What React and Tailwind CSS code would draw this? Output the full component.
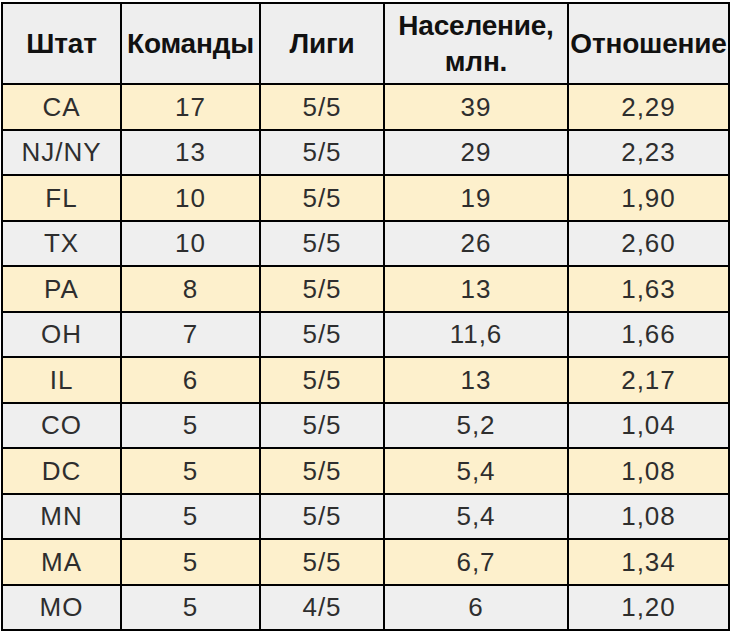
import React from "react";

const rows = [
  ["CA", "17", "5/5", "39", "2,29"],
  ["NJ/NY", "13", "5/5", "29", "2,23"],
  ["FL", "10", "5/5", "19", "1,90"],
  ["TX", "10", "5/5", "26", "2,60"],
  ["PA", "8", "5/5", "13", "1,63"],
  ["OH", "7", "5/5", "11,6", "1,66"],
  ["IL", "6", "5/5", "13", "2,17"],
  ["CO", "5", "5/5", "5,2", "1,04"],
  ["DC", "5", "5/5", "5,4", "1,08"],
  ["MN", "5", "5/5", "5,4", "1,08"],
  ["MA", "5", "5/5", "6,7", "1,34"],
  ["MO", "5", "4/5", "6", "1,20"],
];

export default function App() {
  return (
    <div className="w-[730px] h-[632px] bg-white pt-[2px] pl-[1px]" style={{ fontFamily: '"Liberation Sans", Arial, sans-serif' }}>
      <table className="border-collapse border-2 border-black w-[727px] table-fixed">
        <colgroup>
          <col className="w-[119px]" />
          <col className="w-[139px]" />
          <col className="w-[124px]" />
          <col className="w-[184px]" />
          <col className="w-[161px]" />
        </colgroup>
        <thead>
          <tr className="h-[81px] bg-[#eeeeee]">
            {["Штат", "Команды", "Лиги", "Население, млн.", "Отношение"].map((h, i) => (
              <th key={i} className="border-2 border-black text-[28px] font-bold text-[#111] leading-[36px] p-0 text-center align-middle whitespace-nowrap tracking-[-0.2px]">
                {h === "Население, млн." ? (<>Население,<br />млн.</>) : h}
              </th>
            ))}
          </tr>
        </thead>
        <tbody>
          {rows.map((r, i) => (
            <tr key={i} className={i % 2 === 0 ? "h-[45.5px] bg-[#fdf0cc]" : "h-[45.5px] bg-[#efefef]"}>
              {r.map((c, j) => (
                <td key={j} className="border-2 border-black text-[26px] text-[#2e2e2e] p-0 text-center align-middle leading-none tracking-[1px]">
                  {c}
                </td>
              ))}
            </tr>
          ))}
        </tbody>
      </table>
    </div>
  );
}
